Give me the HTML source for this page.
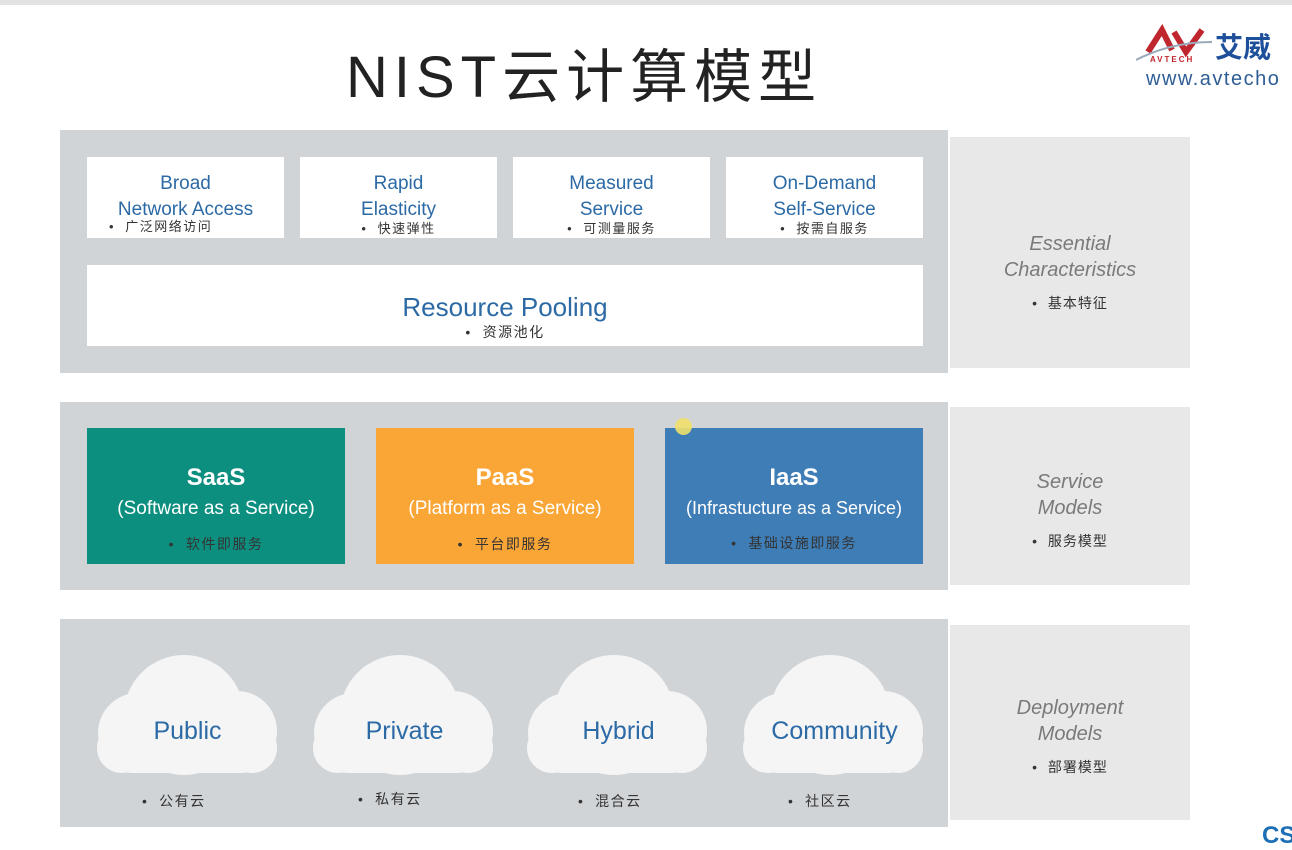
<!DOCTYPE html>
<html><head><meta charset="utf-8"><style>
*{margin:0;padding:0;box-sizing:border-box}
body{width:1292px;height:843px;background:#fff;position:relative;overflow:hidden;font-family:"Liberation Sans","Noto Sans CJK SC",sans-serif}
.a{position:absolute}
.band{background:#d1d4d7}
.lab{background:#e8e8e8;text-align:center;color:#7a7a7a}
.lab i{display:block;font-size:20px;line-height:26px}
.lab span{display:block;font-size:14px;color:#333;margin-top:10px;letter-spacing:1px}
.box{background:#fff;text-align:center;color:#2c6aa6;font-size:19px;line-height:26px}
.cn{font-size:13px;color:#333;line-height:16px;letter-spacing:1.5px}
.svc{text-align:center;color:#fff}
.svc b{display:block;font-size:24px;margin-top:36px}
.svc p{font-size:19px;margin-top:6px}
.svc .cn{color:#333;margin-top:16px;font-size:14px}
.cl{position:absolute;text-align:center;color:#2c6aa6;font-size:25px}
.cc{position:absolute;font-size:14px;color:#333;letter-spacing:1.5px}
</style></head><body>
<div class="a" style="left:0;top:0;width:1292px;height:5px;background:#e2e2e2"></div>
<div class="a" style="left:346px;top:30px;font-size:58px;color:#222;letter-spacing:6px;white-space:nowrap">NIST云计算模型</div>
<svg class="a" style="left:1136px;top:24px" width="76" height="44"><path d="M12 28 L26 6 L36 26" fill="none" stroke="#c0262d" stroke-width="6"/><path d="M38 8 L50 28 L66 6" fill="none" stroke="#c0262d" stroke-width="6"/><path d="M0 36 Q35 18 76 18" fill="none" stroke="#9ab" stroke-width="2"/></svg>
<div class="a" style="left:1150px;top:55px;font-size:8px;color:#c0262d;font-weight:bold;letter-spacing:2px">AVTECH</div>
<div class="a" style="left:1215px;top:26px;font-size:28px;color:#1e4f9a;font-weight:bold;white-space:nowrap">艾威</div>
<div class="a" style="left:1146px;top:68px;font-size:20px;color:#2e5d96;letter-spacing:1.5px;white-space:nowrap">www.avtecho</div>

<div class="a band" style="left:60px;top:130px;width:888px;height:243px"></div>
<div class="a lab" style="left:950px;top:137px;width:240px;height:231px;padding-top:94px"><i>Essential<br>Characteristics</i><span>•&nbsp; 基本特征</span></div>
<div class="a box" style="left:87px;top:157px;width:197px;height:81px;padding-top:14px">Broad<br>Network Access<div class="cn" style="margin-top:-4px;text-align:left;padding-left:22px">•&nbsp; 广泛网络访问</div></div>
<div class="a box" style="left:300px;top:157px;width:197px;height:81px;padding-top:14px">Rapid<br>Elasticity<div class="cn" style="margin-top:-2px">•&nbsp; 快速弹性</div></div>
<div class="a box" style="left:513px;top:157px;width:197px;height:81px;padding-top:14px">Measured<br>Service<div class="cn" style="margin-top:-2px">•&nbsp; 可测量服务</div></div>
<div class="a box" style="left:726px;top:157px;width:197px;height:81px;padding-top:14px">On-Demand<br>Self-Service<div class="cn" style="margin-top:-2px">•&nbsp; 按需自服务</div></div>
<div class="a box" style="left:87px;top:265px;width:836px;height:81px;padding-top:27px;font-size:26px;line-height:30px">Resource Pooling<div class="cn" style="font-size:14px;margin-top:2px">•&nbsp; 资源池化</div></div>

<div class="a band" style="left:60px;top:402px;width:888px;height:188px"></div>
<div class="a lab" style="left:950px;top:407px;width:240px;height:178px;padding-top:62px"><i>Service<br>Models</i><span>•&nbsp; 服务模型</span></div>
<div class="a svc" style="left:87px;top:428px;width:258px;height:136px;background:#0d8f80"><b>SaaS</b><p>(Software as a Service)</p><div class="cn">•&nbsp; 软件即服务</div></div>
<div class="a svc" style="left:376px;top:428px;width:258px;height:136px;background:#faa637"><b>PaaS</b><p>(Platform as a Service)</p><div class="cn">•&nbsp; 平台即服务</div></div>
<div class="a svc" style="left:665px;top:428px;width:258px;height:136px;background:#3f7db6"><b>IaaS</b><p style="font-size:18px">(Infrastucture as a Service)</p><div class="cn">•&nbsp; 基础设施即服务</div></div>
<div class="a" style="left:675px;top:418px;width:17px;height:17px;border-radius:50%;background:#f0e06a;opacity:.9"></div>

<div class="a band" style="left:60px;top:619px;width:888px;height:208px"></div>
<div class="a lab" style="left:950px;top:625px;width:240px;height:195px;padding-top:70px"><i>Deployment<br>Models</i><span>•&nbsp; 部署模型</span></div>

<svg class="a" style="left:0;top:0" width="1292" height="843">
<defs><g id="c" fill="#f5f5f5"><circle cx="92" cy="62" r="60"/><circle cx="46" cy="80" r="40"/><circle cx="145" cy="78" r="40"/><circle cx="30" cy="95" r="25"/><circle cx="160" cy="95" r="25"/><rect x="20" y="80" width="150" height="40" rx="20"/></g></defs>
<use href="#c" x="92" y="653"/><use href="#c" x="308" y="653"/><use href="#c" x="522" y="653"/><use href="#c" x="738" y="653"/>
</svg>
<div class="cl" style="left:95px;top:717px;width:185px">Public</div>
<div class="cl" style="left:312px;top:717px;width:185px">Private</div>
<div class="cl" style="left:526px;top:717px;width:185px">Hybrid</div>
<div class="cl" style="left:742px;top:717px;width:185px">Community</div>
<div class="cc" style="left:142px;top:791px">•&nbsp; 公有云</div>
<div class="cc" style="left:358px;top:789px">•&nbsp; 私有云</div>
<div class="cc" style="left:578px;top:791px">•&nbsp; 混合云</div>
<div class="cc" style="left:788px;top:791px">•&nbsp; 社区云</div>
<div class="a" style="left:1262px;top:822px;font-size:24px;font-weight:bold;color:#1d6fb5">CS</div>
</body></html>
